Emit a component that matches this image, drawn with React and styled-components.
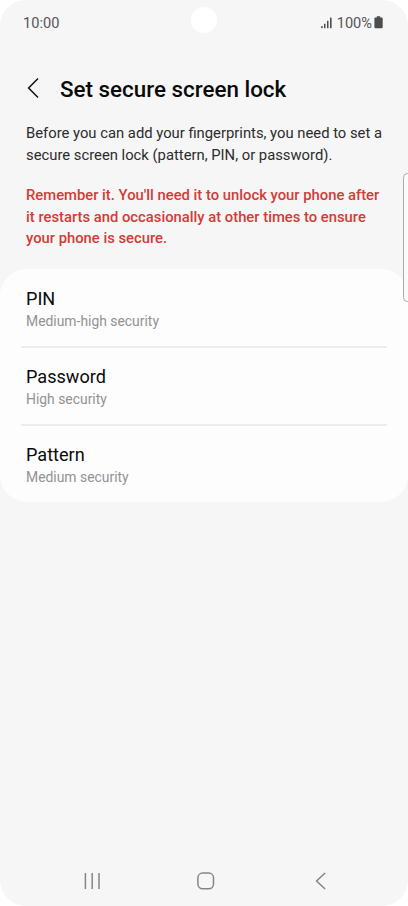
import styled, { createGlobalStyle } from 'styled-components';

const options = [
  { name: 'PIN', level: 'Medium-high security' },
  { name: 'Password', level: 'High security' },
  { name: 'Pattern', level: 'Medium security' },
];

const App = () => {
  return (
    <>
      <GlobalStyle />
      <Phone>
        <StatusBar>
          <StatusText>10:00</StatusText>
          <StatusIcons>
            <svg width="12" height="12" viewBox="0 0 12 12" fill="#4c4c4c">
              <rect x="0.2" y="9" width="1.4" height="2.2" />
              <rect x="3" y="6.8" width="1.5" height="4.4" />
              <rect x="6" y="3.8" width="1.5" height="7.4" />
              <rect x="9" y="0.6" width="1.6" height="10.6" />
            </svg>
            <StatusText>100%</StatusText>
            <svg width="9" height="14" viewBox="0 0 9 14" fill="#4c4c4c">
              <path d="M2.8 0.2h3.4v1.3h1.5q1 0 1 1v8.7q0 1-1 1H1.4q-1 0-1-1V2.5q0-1 1-1h1.4z" />
            </svg>
          </StatusIcons>
        </StatusBar>
        <Camera />
        <Header>
          <BackButton aria-label="Back">
            <svg width="12" height="22" viewBox="0 0 12 22" fill="none" stroke="#111" strokeWidth="1.5">
              <path d="M11 1.5L1.6 11L11 20.5" />
            </svg>
          </BackButton>
          <Title>Set secure screen lock</Title>
        </Header>
        <Intro>
          Before you can add your fingerprints, you need to set a
          <br />
          secure screen lock (pattern, PIN, or password).
        </Intro>
        <Warning>
          Remember it. You'll need it to unlock your phone after
          <br />
          it restarts and occasionally at other times to ensure
          <br />
          your phone is secure.
        </Warning>
        <Card>
          {options.map((option) => (
            <Option key={option.name}>
              <OptionName>{option.name}</OptionName>
              <OptionLevel>{option.level}</OptionLevel>
            </Option>
          ))}
        </Card>
        <EdgePanel />
        <NavBar>
          <NavButton aria-label="Recents">
            <svg width="18" height="18" viewBox="0 0 18 18" stroke="#858585" strokeWidth="1.5">
              <path d="M1.4 1v16M8.2 1v16M15 1v16" />
            </svg>
          </NavButton>
          <NavButton aria-label="Home">
            <svg width="18" height="18" viewBox="0 0 18 18" fill="none" stroke="#858585" strokeWidth="1.5">
              <rect x="0.9" y="1" width="15.6" height="15.8" rx="4.8" />
            </svg>
          </NavButton>
          <NavButton aria-label="Back">
            <svg width="18" height="18" viewBox="0 0 18 18" fill="none" stroke="#858585" strokeWidth="1.5">
              <path d="M15.1 1L6.6 9L15.1 17" />
            </svg>
          </NavButton>
        </NavBar>
      </Phone>
    </>
  );
};

const GlobalStyle = createGlobalStyle`
  * {
    box-sizing: border-box;
  }
  body {
    margin: 0;
    background: #fff;
    font-family: Roboto, sans-serif;
  }
  svg {
    display: block;
  }
`;

const Phone = styled.div`
  position: relative;
  display: flex;
  flex-direction: column;
  width: 408px;
  height: 906px;
  border-radius: 26px;
  background: #f6f6f6;
  overflow: hidden;
`;

const StatusBar = styled.div`
  display: flex;
  align-items: center;
  justify-content: space-between;
  height: 44px;
  padding: 1px 25px 0 23px;
`;

const StatusText = styled.span`
  font-size: 14.6px;
  line-height: 18px;
  color: #555;
`;

const StatusIcons = styled.div`
  display: flex;
  align-items: center;
  gap: 2px;

  svg:first-child {
    margin-right: 2px;
  }
`;

/* Front camera cutout, over the status bar */
const Camera = styled.div`
  position: absolute;
  top: 7px;
  left: 191px;
  width: 26px;
  height: 26px;
  border-radius: 50%;
  background: #fff;
`;

const Header = styled.header`
  display: flex;
  align-items: center;
  height: 79px;
  padding: 9px 26px 0 27px;
`;

const BackButton = styled.button`
  width: 33px;
  padding: 0;
  border: 0;
  background: none;
`;

const Title = styled.h1`
  margin: 2px 0 0;
  font-size: 22.4px;
  font-weight: 500;
  line-height: 28px;
  color: #0a0a0a;
  white-space: nowrap;
`;

const Intro = styled.p`
  margin: 0 0 19px;
  padding-left: 26px;
  font-size: 14.8px;
  line-height: 21.6px;
  color: #2c2c2c;
  white-space: nowrap;
`;

const Warning = styled(Intro)`
  color: #d23c36;
  font-weight: 500;
`;

const Card = styled.ul`
  margin: 0;
  padding: 0 21px;
  border-radius: 27px;
  background: #fdfdfd;
  list-style: none;
`;

const Option = styled.li`
  height: 77px;
  padding: 18px 5px 0;

  & + & {
    height: 78px;
    border-top: 2px solid #ededed;
    padding-top: 17px;
  }
`;

const OptionName = styled.div`
  font-size: 18.1px;
  line-height: 24px;
  color: #0a0a0a;
`;

const OptionLevel = styled.div`
  font-size: 13.9px;
  line-height: 20px;
  color: #929292;
`;

/* Handle of the edge panel, sticking in from the right side */
const EdgePanel = styled.div`
  position: absolute;
  top: 173px;
  right: -4px;
  width: 9px;
  height: 129px;
  border: 1px solid #aaa;
  border-radius: 5px;
  background: #fafafa;
`;

const NavBar = styled.nav`
  display: flex;
  justify-content: space-between;
  margin-top: auto;
  padding: 0 80px 16px 84px;
`;

const NavButton = styled.button`
  padding: 0;
  border: 0;
  background: none;
`;

export default App;
